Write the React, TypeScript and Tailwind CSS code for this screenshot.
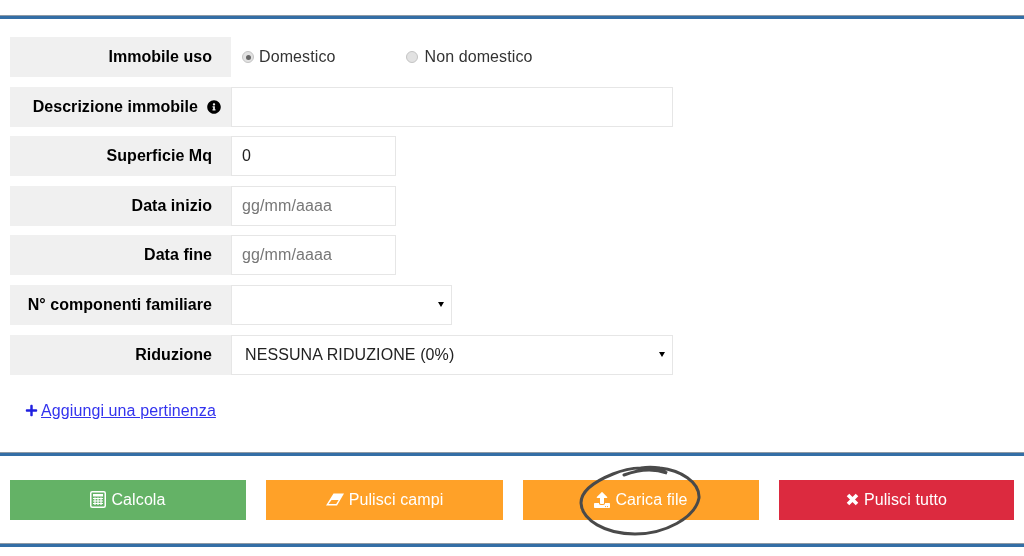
import { FaInfoCircle, FaPlus, FaUpload } from "react-icons/fa";
import type { ReactNode } from "react";

const Rule = () => (
  <div className="h-[4px] bg-[#336ea6] border-t border-[#8f9aa5]" />
);

const Row = ({ label, children }: { label: ReactNode; children: ReactNode }) => (
  <div className="flex h-[40px]">
    <div className="w-[221px] shrink-0 bg-[#f0f0f0] flex items-center justify-end pr-[19px] font-bold tracking-[0.04px] text-black whitespace-nowrap">
      {label}
    </div>
    {children}
  </div>
);

const Radio = ({ checked, label, gap }: { checked?: boolean; label: string; gap: string }) => (
  <div className={`flex items-center ${gap}`}>
    <span className="w-[12px] h-[12px] rounded-full bg-[#e2e2e2] border border-[#c4c4c4] flex items-center justify-center">
      {checked && <span className="w-[5px] h-[5px] rounded-full bg-[#666666]" />}
    </span>
    <span className="text-[#333333]">{label}</span>
  </div>
);

const textInput =
  "h-full bg-white border border-[#e6e6e6] px-[10px] text-[#222222] placeholder:text-[#777777] outline-none";

const Select = ({ width, value }: { width: string; value?: string }) => (
  <div className={`relative h-full ${width}`}>
    <select className="w-full h-full appearance-none bg-white border border-[#e6e6e6] pl-[13px] text-[#222222] outline-none">
      <option>{value}</option>
    </select>
    <span className="absolute right-[8px] top-[17px] w-0 h-0 border-x-[3px] border-x-transparent border-t-[5px] border-t-black" />
  </div>
);

const CalcIcon = () => (
  <svg width="16" height="17" viewBox="0 0 16 17" fill="none" stroke="white">
    <rect x="0.75" y="0.75" width="14.5" height="15.5" rx="1.5" strokeWidth="1.5" />
    <rect x="3" y="3" width="10" height="2.5" fill="white" stroke="none" />
    <path d="M3 7.5h10M3 10h10M3 12.5h10M5 6.5v7.5M8 6.5v7.5M11 6.5v7.5" strokeWidth="1.2" />
  </svg>
);

const EraserIcon = () => (
  <svg width="18" height="13" viewBox="0 0 18 13" fill="white">
    <path d="M7.5 0.5H18L11 12.5H0ZM5.5 7L2.5 11H10.2L12.6 7Z" fillRule="evenodd" />
  </svg>
);

const TimesIcon = () => (
  <svg width="13" height="13" viewBox="0 0 13 13" stroke="white" strokeWidth="3.6">
    <path d="M2 2L11 11M11 2L2 11" />
  </svg>
);

const Btn = ({ cls, icon, label }: { cls: string; icon: ReactNode; label: string }) => (
  <button className={`h-[40px] ${cls} text-white flex items-center justify-center gap-[5px]`}>
    {icon}
    {label}
  </button>
);

export default function App() {
  return (
    <div className="relative w-[1024px] h-[556px] overflow-hidden bg-white text-[16px] tracking-[0.1px] blur-[0.5px] font-['Liberation_Sans',Arial,sans-serif]">
      <div className="pt-[15px]">
        <Rule />
      </div>

      <div className="px-[10px] pt-[18px] flex flex-col gap-[9.6px]">
        <Row label="Immobile uso">
          <div className="flex items-center pl-[11px] gap-[71px]">
            <Radio checked gap="gap-[5px]" label="Domestico" />
            <Radio gap="gap-[6px]" label="Non domestico" />
          </div>
        </Row>
        <Row
          label={
            <span className="flex items-center gap-[9px] -mr-[9px]">
              Descrizione immobile <FaInfoCircle className="w-[14px] h-[14px]" />
            </span>
          }
        >
          <input className={`${textInput} w-[442px]`} />
        </Row>
        <Row label="Superficie Mq">
          <input className={`${textInput} w-[165px]`} defaultValue="0" />
        </Row>
        <Row label="Data inizio">
          <input className={`${textInput} w-[165px]`} placeholder="gg/mm/aaaa" />
        </Row>
        <Row label="Data fine">
          <input className={`${textInput} w-[165px]`} placeholder="gg/mm/aaaa" />
        </Row>
        <Row label="N° componenti familiare">
          <Select width="w-[221px]" />
        </Row>
        <Row label="Riduzione">
          <Select width="w-[442px]" value="NESSUNA RIDUZIONE (0%)" />
        </Row>
      </div>

      <div className="pl-[25px] pt-[24px] h-[77px]">
        <a className="inline-flex items-center text-[#3333ee] underline">
          <FaPlus className="w-[13px] h-[13px] text-[#1f1fe0]" />
          <span className="ml-[3px]">Aggiungi una pertinenza</span>
        </a>
      </div>

      <Rule />

      <div className="flex px-[10px] pt-[24px]">
        <Btn cls="w-[236px] bg-[#64b266]" icon={<CalcIcon />} label="Calcola" />
        <Btn cls="w-[237px] ml-[20px] bg-[#ffa128]" icon={<EraserIcon />} label="Pulisci campi" />
        <Btn cls="w-[236px] ml-[20px] bg-[#ffa128]" icon={<FaUpload className="w-[16px] h-[16px]" />} label="Carica file" />
        <Btn cls="w-[235px] ml-[20px] bg-[#dc2a3f]" icon={<TimesIcon />} label="Pulisci tutto" />
      </div>

      <div className="pt-[23px]">
        <Rule />
      </div>

      {/* hand drawn circle over the upload button */}
      <svg className="absolute left-[575px] top-[460px]" width="135" height="80" viewBox="0 0 135 80" fill="none">
        <path
          d="M49 15C62 10 78 8 92 13C78 5 55 7 38 14C18 22 6 32 6 43C7 60 30 74 60 74C90 74 120 58 124 38C125 22 105 10 85 8C78 7 72 7 66 8"
          stroke="#4a4a4a"
          strokeWidth="3"
          strokeLinecap="round"
        />
      </svg>
    </div>
  );
}
